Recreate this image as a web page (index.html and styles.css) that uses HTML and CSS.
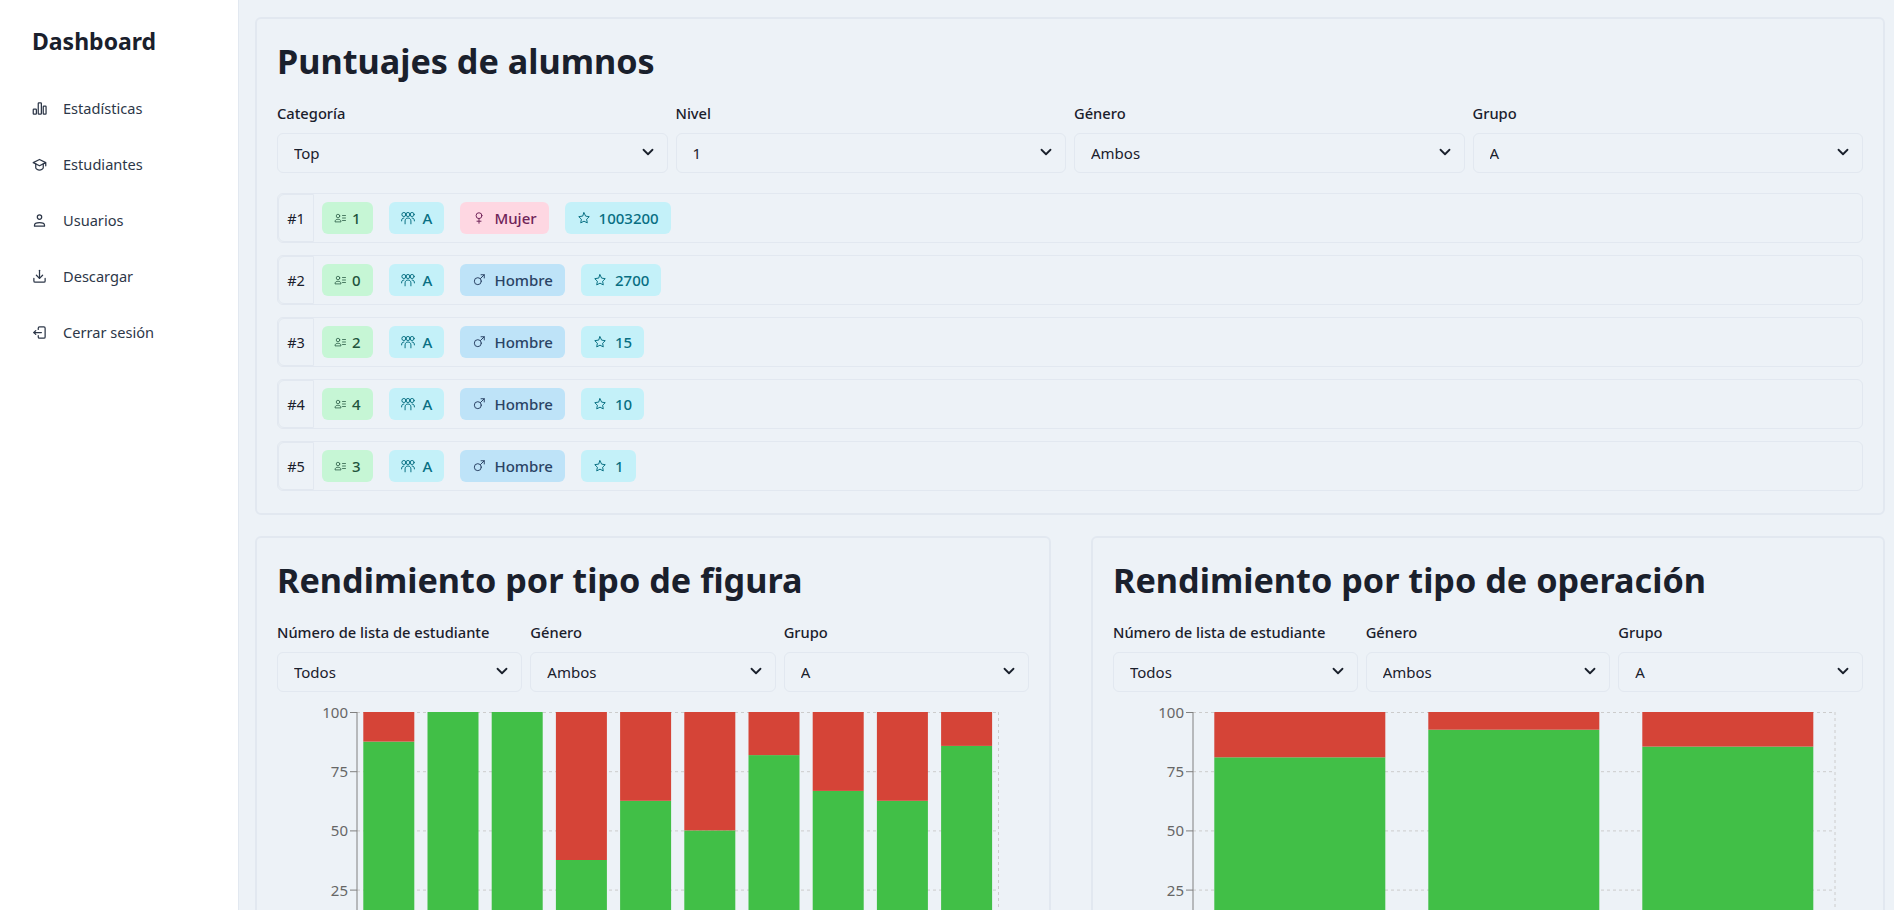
FILE: index.html
```html
<!DOCTYPE html>
<html lang="es">

<head>
    <meta charset="UTF-8">
    <meta name="viewport" content="width=device-width, initial-scale=1.0">
    <title>Dashboard</title>
    <link rel="stylesheet" href="styles.css">
</head>

<body>
    <aside class="sidebar">
        <h1 class="brand">Dashboard</h1>
        <nav class="nav">
            <a class="nav-item" href="#">
                <svg class="nav-icon" viewBox="0 0 24 24"><rect x="2" y="13" width="5" height="8" rx="1"/><rect x="10" y="3" width="5" height="18" rx="1"/><rect x="18" y="8" width="4.500" height="13" rx="1"/></svg>
                Estadísticas
            </a>
            <a class="nav-item" href="#">
                <svg class="nav-icon" viewBox="0 0 24 24"><path d="M22 9 12 4 2 9l10 5 10-5v5"/><path d="M6 11v6c0 1.500 3 4 6 4s6-2.500 6-4v-6"/></svg>
                Estudiantes
            </a>
            <a class="nav-item" href="#">
                <svg class="nav-icon" viewBox="0 0 24 24"><circle cx="12" cy="6.500" r="3.500"/><path d="M4 21v-1.500c0-2 3-4 8-4s8 2 8 4V21z"/></svg>
                Usuarios
            </a>
            <a class="nav-item" href="#">
                <svg class="nav-icon" viewBox="0 0 24 24"><path d="M3 15v4a2 2 0 0 0 2 2h14a2 2 0 0 0 2-2v-4"/><path d="m7 10 5 5 5-5"/><path d="M12 2v13"/></svg>
                Descargar
            </a>
            <a class="nav-item" href="#">
                <svg class="nav-icon" viewBox="0 0 24 24"><path d="M10 7V5a2 2 0 0 1 2-2h7a2 2 0 0 1 2 2v14a2 2 0 0 1-2 2h-7a2 2 0 0 1-2-2v-2"/><path d="M15 12H3"/><path d="m6 9-3 3 3 3"/></svg>
                Cerrar sesión
            </a>
        </nav>
    </aside>

    <main class="main">
        <svg class="icon-defs" aria-hidden="true">
            <defs>
                <symbol id="i-list" viewBox="0 0 24 24"><circle cx="8" cy="8" r="3.500"/><path d="M2 19c0-3 2.500-4.500 6-4.500s6 1.500 6 4.500z"/><path d="M17 7h6M17 12h6M17 17h6"/></symbol>
                <symbol id="i-group" viewBox="0 0 24 24"><circle cx="5" cy="6" r="3.500"/><circle cx="12" cy="6" r="3.500"/><circle cx="19" cy="6" r="3.500"/><path d="M1 17c0-3 1-5 4-5M23 17c0-3-1-5-4-5"/><path d="M7 22v-5c0-3 2-5 5-5s5 2 5 5v5"/></symbol>
                <symbol id="i-female" viewBox="0 0 24 24"><circle cx="12" cy="8" r="5"/><path d="M12 13v8M8.500 17.500h7"/></symbol>
                <symbol id="i-male" viewBox="0 0 24 24"><circle cx="10" cy="14" r="6"/><path d="M14.500 9.500 21 3M15.500 3H21v5.500"/></symbol>
                <symbol id="i-star" viewBox="0 0 24 24"><path d="m12 3 2.800 5.800 6.200.9-4.500 4.400 1.100 6.300-5.600-3-5.600 3 1.100-6.300L3 9.700l6.200-.9z"/></symbol>
                <symbol id="i-chevron" viewBox="0 0 24 24"><path d="m6 9 6 6 6-6"/></symbol>
            </defs>
        </svg>

        <section class="card">
            <h2 class="card-title">Puntuajes de alumnos</h2>
            <div class="filters filters-4">
                <div class="field">
                    <label class="field-label" for="cat">Categoría</label>
                    <div class="select-wrap">
                        <select class="select" id="cat"><option>Top</option></select>
                        <svg class="chevron"><use href="#i-chevron"/></svg>
                    </div>
                </div>
                <div class="field">
                    <label class="field-label" for="niv">Nivel</label>
                    <div class="select-wrap">
                        <select class="select" id="niv"><option>1</option></select>
                        <svg class="chevron"><use href="#i-chevron"/></svg>
                    </div>
                </div>
                <div class="field">
                    <label class="field-label" for="gen">Género</label>
                    <div class="select-wrap">
                        <select class="select" id="gen"><option>Ambos</option></select>
                        <svg class="chevron"><use href="#i-chevron"/></svg>
                    </div>
                </div>
                <div class="field">
                    <label class="field-label" for="gru">Grupo</label>
                    <div class="select-wrap">
                        <select class="select" id="gru"><option>A</option></select>
                        <svg class="chevron"><use href="#i-chevron"/></svg>
                    </div>
                </div>
            </div>

            <ul class="scores">
                <li class="score-row">
                    <span class="rank">#1</span>
                    <span class="badge badge-green"><svg class="badge-icon"><use href="#i-list"/></svg>1</span>
                    <span class="badge badge-cyan"><svg class="badge-icon"><use href="#i-group"/></svg>A</span>
                    <span class="badge badge-pink"><svg class="badge-icon"><use href="#i-female"/></svg>Mujer</span>
                    <span class="badge badge-cyan"><svg class="badge-icon"><use href="#i-star"/></svg>1003200</span>
                </li>
                <li class="score-row">
                    <span class="rank">#2</span>
                    <span class="badge badge-green"><svg class="badge-icon"><use href="#i-list"/></svg>0</span>
                    <span class="badge badge-cyan"><svg class="badge-icon"><use href="#i-group"/></svg>A</span>
                    <span class="badge badge-blue"><svg class="badge-icon"><use href="#i-male"/></svg>Hombre</span>
                    <span class="badge badge-cyan"><svg class="badge-icon"><use href="#i-star"/></svg>2700</span>
                </li>
                <li class="score-row">
                    <span class="rank">#3</span>
                    <span class="badge badge-green"><svg class="badge-icon"><use href="#i-list"/></svg>2</span>
                    <span class="badge badge-cyan"><svg class="badge-icon"><use href="#i-group"/></svg>A</span>
                    <span class="badge badge-blue"><svg class="badge-icon"><use href="#i-male"/></svg>Hombre</span>
                    <span class="badge badge-cyan"><svg class="badge-icon"><use href="#i-star"/></svg>15</span>
                </li>
                <li class="score-row">
                    <span class="rank">#4</span>
                    <span class="badge badge-green"><svg class="badge-icon"><use href="#i-list"/></svg>4</span>
                    <span class="badge badge-cyan"><svg class="badge-icon"><use href="#i-group"/></svg>A</span>
                    <span class="badge badge-blue"><svg class="badge-icon"><use href="#i-male"/></svg>Hombre</span>
                    <span class="badge badge-cyan"><svg class="badge-icon"><use href="#i-star"/></svg>10</span>
                </li>
                <li class="score-row">
                    <span class="rank">#5</span>
                    <span class="badge badge-green"><svg class="badge-icon"><use href="#i-list"/></svg>3</span>
                    <span class="badge badge-cyan"><svg class="badge-icon"><use href="#i-group"/></svg>A</span>
                    <span class="badge badge-blue"><svg class="badge-icon"><use href="#i-male"/></svg>Hombre</span>
                    <span class="badge badge-cyan"><svg class="badge-icon"><use href="#i-star"/></svg>1</span>
                </li>
            </ul>
        </section>

        <div class="charts">
            <section class="card">
                <h2 class="card-title">Rendimiento por tipo de figura</h2>
                <div class="filters filters-3">
                    <div class="field">
                        <label class="field-label" for="num1">Número de lista de estudiante</label>
                        <div class="select-wrap">
                            <select class="select" id="num1"><option>Todos</option></select>
                            <svg class="chevron"><use href="#i-chevron"/></svg>
                        </div>
                    </div>
                    <div class="field">
                        <label class="field-label" for="gen1">Género</label>
                        <div class="select-wrap">
                            <select class="select" id="gen1"><option>Ambos</option></select>
                            <svg class="chevron"><use href="#i-chevron"/></svg>
                        </div>
                    </div>
                    <div class="field">
                        <label class="field-label" for="gru1">Grupo</label>
                        <div class="select-wrap">
                            <select class="select" id="gru1"><option>A</option></select>
                            <svg class="chevron"><use href="#i-chevron"/></svg>
                        </div>
                    </div>
                </div>
                <svg class="chart" viewBox="0 0 752 260">
                    <g class="grid">
                        <path d="M80 8.500H721.500M80 67.700H721.500M80 126.900H721.500M80 186.100H721.500M721.500 8V245"/>
                    </g>
                    <g class="ok">
                        <rect x="86.300" y="37.600" width="51" height="207.200"/>
                        <rect x="150.500" y="8" width="51" height="236.800"/>
                        <rect x="214.700" y="8" width="51" height="236.800"/>
                        <rect x="278.900" y="156" width="51" height="88.800"/>
                        <rect x="343.100" y="96.800" width="51" height="148"/>
                        <rect x="407.300" y="126.400" width="51" height="118.400"/>
                        <rect x="471.500" y="51.100" width="51" height="193.700"/>
                        <rect x="535.700" y="86.900" width="51" height="157.900"/>
                        <rect x="599.900" y="96.800" width="51" height="148"/>
                        <rect x="664.100" y="41.900" width="51" height="202.900"/>
                    </g>
                    <g class="bad">
                        <rect x="86.300" y="8" width="51" height="29.600"/>
                        <rect x="278.900" y="8" width="51" height="148"/>
                        <rect x="343.100" y="8" width="51" height="88.800"/>
                        <rect x="407.300" y="8" width="51" height="118.400"/>
                        <rect x="471.500" y="8" width="51" height="43.100"/>
                        <rect x="535.700" y="8" width="51" height="78.900"/>
                        <rect x="599.900" y="8" width="51" height="88.800"/>
                        <rect x="664.100" y="8" width="51" height="33.900"/>
                    </g>
                    <path class="axis" d="M80 8V245M73 8.500H80M73 67.700H80M73 126.900H80M73 186.100H80"/>
                    <g class="ticks">
                        <text x="71" y="13.500">100</text>
                        <text x="71" y="73">75</text>
                        <text x="71" y="132">50</text>
                        <text x="71" y="191.500">25</text>
                    </g>
                </svg>
            </section>

            <section class="card">
                <h2 class="card-title">Rendimiento por tipo de operación</h2>
                <div class="filters filters-3">
                    <div class="field">
                        <label class="field-label" for="num2">Número de lista de estudiante</label>
                        <div class="select-wrap">
                            <select class="select" id="num2"><option>Todos</option></select>
                            <svg class="chevron"><use href="#i-chevron"/></svg>
                        </div>
                    </div>
                    <div class="field">
                        <label class="field-label" for="gen2">Género</label>
                        <div class="select-wrap">
                            <select class="select" id="gen2"><option>Ambos</option></select>
                            <svg class="chevron"><use href="#i-chevron"/></svg>
                        </div>
                    </div>
                    <div class="field">
                        <label class="field-label" for="gru2">Grupo</label>
                        <div class="select-wrap">
                            <select class="select" id="gru2"><option>A</option></select>
                            <svg class="chevron"><use href="#i-chevron"/></svg>
                        </div>
                    </div>
                </div>
                <svg class="chart" viewBox="0 0 750 260">
                    <g class="grid">
                        <path d="M80 8.500H722M80 67.700H722M80 126.900H722M80 186.100H722M722 8V245"/>
                    </g>
                    <g class="ok">
                        <rect x="101.300" y="53.300" width="171" height="191.500"/>
                        <rect x="315.300" y="25.700" width="171" height="219.100"/>
                        <rect x="529.300" y="42.600" width="171" height="202.200"/>
                    </g>
                    <g class="bad">
                        <rect x="101.300" y="8" width="171" height="45.300"/>
                        <rect x="315.300" y="8" width="171" height="17.700"/>
                        <rect x="529.300" y="8" width="171" height="34.600"/>
                    </g>
                    <path class="axis" d="M80 8V245M73 8.500H80M73 67.700H80M73 126.900H80M73 186.100H80"/>
                    <g class="ticks">
                        <text x="71" y="13.500">100</text>
                        <text x="71" y="73">75</text>
                        <text x="71" y="132">50</text>
                        <text x="71" y="191.500">25</text>
                    </g>
                </svg>
            </section>
        </div>
    </main>
</body>

</html>
```

FILE: styles.css
```css
* {
    box-sizing: border-box;
}

html,
body {
    height: 100%;
}

body {
    font-family: "Noto Sans", "Open Sans", sans-serif;
    color: #1a202c;
    background-color: #edf2f7;
    margin: 0;
    display: flex;
    overflow: hidden;
}

.sidebar {
    flex: 0 0 239px;
    background: #fff;
    border-right: 1px solid #e2e8f0;
    padding: 23px 32px;
}

.brand {
    font-size: 23px;
    line-height: 36px;
    font-weight: 700;
    margin: 0 0 21px;
}

.nav {
    display: flex;
    flex-direction: column;
}

.nav-item {
    display: flex;
    align-items: center;
    gap: 16px;
    height: 56px;
    color: #2d3748;
    font-size: 14.6px;
    text-decoration: none;
}

.nav-icon {
    width: 15px;
    height: 15px;
    fill: none;
    stroke: #2d3748;
    stroke-width: 2;
    stroke-linecap: round;
    stroke-linejoin: round;
}

.main {
    flex: 1;
    min-width: 0;
    padding: 17px 9px 0 16px;
}

.icon-defs {
    display: none;
}

.card {
    border: 2px solid #e2e8f0;
    border-radius: 6px;
    padding: 20px 20px 22px;
}

.card-title {
    font-size: 34.2px;
    line-height: 44px;
    font-weight: 700;
    margin: 0 0 18px;
}

.filters {
    display: grid;
    column-gap: 8px;
}

.filters-4 {
    grid-template-columns: repeat(4, 1fr);
}

.filters-3 {
    grid-template-columns: repeat(3, 1fr);
}

.field-label {
    display: block;
    font-size: 14.7px;
    font-weight: 500;
    line-height: 24px;
    margin-bottom: 8px;
}

.select-wrap {
    position: relative;
}

.select {
    appearance: none;
    display: block;
    width: 100%;
    height: 40px;
    padding: 0 32px 0 16px;
    border: 1px solid #e2e8f0;
    border-radius: 6px;
    background: transparent;
    color: #1a202c;
    font-family: inherit;
    font-size: 15px;
}

.chevron {
    position: absolute;
    top: 10px;
    right: 11px;
    width: 18px;
    height: 18px;
    fill: none;
    stroke: #1a202c;
    stroke-width: 2.400;
    stroke-linecap: round;
    stroke-linejoin: round;
    pointer-events: none;
}

.scores {
    list-style: none;
    margin: 20px 0 0;
    padding: 0;
    display: flex;
    flex-direction: column;
    gap: 12px;
}

.score-row {
    display: flex;
    align-items: center;
    gap: 16px;
    height: 50px;
    border: 1px solid #e2e8f0;
    border-radius: 6px;
}

.rank {
    flex: 0 0 36px;
    height: 48px;
    margin-right: -8px;
    border: 1px solid #e2e8f0;
    border-radius: 6px 0 0 6px;
    display: flex;
    align-items: center;
    justify-content: center;
    font-size: 14.5px;
}

.badge {
    display: flex;
    align-items: center;
    gap: 8px;
    height: 32px;
    padding: 0 12px;
    border-radius: 6px;
    font-size: 15px;
    font-weight: 500;
}

.badge-icon {
    width: 14px;
    height: 14px;
    fill: none;
    stroke: currentColor;
    stroke-width: 1.700;
    stroke-linecap: round;
    stroke-linejoin: round;
}

.badge-green {
    background: #c6f6d5;
    color: #22543d;
    gap: 6px;
}

.badge-green .badge-icon {
    width: 12px;
    height: 12px;
    stroke-width: 1.500;
}

.badge-cyan {
    background: #c4f1f9;
    color: #086f83;
}

.badge-pink {
    background: #fed7e2;
    color: #702459;
}

.badge-blue {
    background: #bee3f8;
    color: #2a4365;
}

.charts {
    display: grid;
    grid-template-columns: 796fr 794fr;
    column-gap: 40px;
    margin-top: 21px;
}

.chart {
    display: block;
    width: 100%;
    height: 260px;
    margin-top: 12px;
    overflow: visible;
}

.grid path {
    fill: none;
    stroke: #ccc;
    stroke-dasharray: 3 3;
}

.ok rect {
    fill: #41bf47;
}

.bad rect {
    fill: #d54437;
}

.axis {
    fill: none;
    stroke: #808080;
}

.ticks text {
    fill: #666;
    font-size: 15px;
    text-anchor: end;
}
```
